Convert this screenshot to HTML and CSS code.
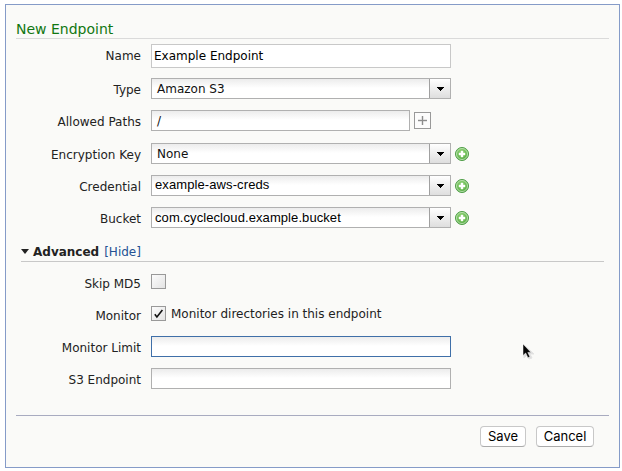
FILE: index.html
```html
<!DOCTYPE html>
<html lang="en">
<head>
<meta charset="utf-8">
<title>New Endpoint</title>
<link rel="stylesheet" href="styles.css">
</head>
<body>
<svg width="0" height="0" class="defs">
  <defs>
    <radialGradient id="green" cx=".45" cy=".35" r=".65"><stop offset="0" stop-color="#91d278"/><stop offset=".65" stop-color="#6abb53"/><stop offset="1" stop-color="#459838"/></radialGradient>
    <symbol id="arrow" viewBox="0 0 7 4"><path d="M0 0h7v1H6v1H5v1H4v1H3V3H2V2H1V1H0z"/></symbol>
    <symbol id="add" viewBox="0 0 14 14"><circle cx="7" cy="7" r="6.5" fill="url(#green)" stroke="#4f9d48"/><circle cx="7" cy="7" r="5.5" fill="none" stroke="#c0e5b4" stroke-width=".9"/><path d="M6 4h2v2h2v2H8v2H6V8H4V6h2z" fill="#fff" stroke="#fff" stroke-width=".4"/></symbol>
  </defs>
</svg>
<main class="panel">
  <h1 class="title">New Endpoint</h1>
  <div class="row row-name"><label>Name</label><div class="field name">Example Endpoint</div></div>
  <div class="row"><label>Type</label><div class="field select"><span class="value">Amazon S3</span><span class="drop"><svg width="7" height="4"><use href="#arrow"/></svg></span></div></div>
  <div class="row row-paths"><label>Allowed Paths</label><div class="field paths">/</div><span class="plus"><svg width="9" height="9" viewBox="0 0 9 9"><path d="M4.5 0v9M0 4.5h9" stroke="#ccc" stroke-width="2"/><path d="M4.5 0v9M0 4.5h9" stroke="#8c8c8c"/></svg></span></div>
  <div class="row"><label>Encryption Key</label><div class="field select"><span class="value">None</span><span class="drop"><svg width="7" height="4"><use href="#arrow"/></svg></span></div><svg class="add" width="14" height="14"><use href="#add"/></svg></div>
  <div class="row"><label>Credential</label><div class="field select"><span class="value plain cred">example-aws-creds</span><span class="drop"><svg width="7" height="4"><use href="#arrow"/></svg></span></div><svg class="add" width="14" height="14"><use href="#add"/></svg></div>
  <div class="row"><label>Bucket</label><div class="field select"><span class="value plain bucket">com.cyclecloud.example.bucket</span><span class="drop"><svg width="7" height="4"><use href="#arrow"/></svg></span></div><svg class="add" width="14" height="14"><use href="#add"/></svg></div>
  <div class="section"><svg width="8" height="5" viewBox="0 0 8 5"><path d="M0 0h8L4 5z" fill="#222"/></svg><b>Advanced</b><a>[Hide]</a></div>
  <div class="row row-check"><label>Skip MD5</label><span class="check"></span></div>
  <div class="row row-check row-monitor"><label>Monitor</label><span class="check"><svg width="13" height="13" viewBox="0 0 13 13"><path d="M2.8 7.2 4.9 9.9 10.4 2.9" fill="none" stroke="#111" stroke-width="1.6"/></svg></span><span class="hint">Monitor directories in this endpoint</span></div>
  <div class="row"><label>Monitor Limit</label><div class="field focus"></div></div>
  <div class="row"><label>S3 Endpoint</label><div class="field"></div></div>
  <footer class="footer"><span class="btn save">Save</span><span class="btn cancel">Cancel</span></footer>
</main>
<svg class="cursor" width="14" height="20" viewBox="0 0 14 20"><path d="M2 2v13l3-3 2 4 3-1-2-4h4z" fill="#ddd" stroke="#e3e3e3"/><path d="M1 1v11.5l2.7-2.5 2.2 4.7 2-1-2.1-4.3H9z" fill="#050505" stroke="#fff" stroke-width=".5"/></svg>
</body>
</html>
```
FILE: styles.css
```css
* { box-sizing: border-box; }
body {
  margin: 0;
  padding: 4px 0 0 5px;
  width: 622px;
  height: 471px;
  overflow: hidden;
  background: #fff;
  font: 12px/16px "DejaVu Sans", Verdana, sans-serif;
  color: #222;
  white-space: nowrap;
}
.defs { position: absolute; }
.panel {
  width: 615px;
  height: 464px;
  border: 1px solid #859bc8;
  background: #fafaf8;
}
.title {
  margin: 0 10px;
  height: 34px;
  padding-top: 14px;
  border-bottom: 1px solid #dadada;
  font-size: 14px;
  line-height: 20px;
  font-weight: normal;
  color: #117711;
}
.row {
  display: flex;
  align-items: flex-start;
  height: 32px;
  padding-top: 5px;
}
.row label {
  width: 135px;
  margin: 4px 10px 0 0;
  text-align: right;
}
.row-name { height: 34px; }
.row-paths { height: 33px; }
.row-check label { margin-top: 2px; }
.field {
  display: flex;
  width: 300px;
  height: 21px;
  border: 1px solid #b0b0b0;
  background: linear-gradient(#ececec, #fff 9px);
  line-height: 19px;
  padding-left: 5px;
  color: #111;
}
.field.name {
  height: 24px;
  border-color: #c8c8c8;
  background: #fff;
  line-height: 22px;
  padding-left: 2px;
  color: #000;
}
.field.paths { width: 259px; line-height: 21px; }
.field.focus { border-color: #3f6fa8; }
.value { flex: 1; line-height: 21px; }
.plain {
  margin-left: -2px;
  font-family: "Liberation Sans", Arial, sans-serif;
  font-size: 13px;
  color: #000;
}
.cred { line-height: 17px; letter-spacing: .1px; }
.bucket { line-height: 19px; letter-spacing: .08px; }
.drop {
  display: flex;
  align-items: center;
  justify-content: center;
  width: 21px;
  border-left: 1px solid #a0a0a0;
  background: linear-gradient(#fff, #dedede);
}
.plus {
  display: flex;
  align-items: center;
  justify-content: center;
  width: 17px;
  height: 17px;
  margin: 2px 0 0 4px;
  border: 1px solid #999;
  background: #fcfcfc;
}
.add { margin: 4px 0 0 4px; }
.section {
  display: flex;
  align-items: center;
  height: 28px;
  margin: 0 15px 7px;
  padding-top: 8px;
  border-bottom: 1px solid #c8c8c8;
}
.section b { margin: 0 5px 0 4px; }
.section a { color: #245293; }
.check {
  display: flex;
  width: 15px;
  height: 15px;
  border: 1px solid #999;
  background: linear-gradient(135deg, #fcfcfc, #e3e3e3);
}
.row-monitor { height: 30px; }
.hint { margin: 0 0 0 5px; }
.footer {
  display: flex;
  justify-content: flex-end;
  gap: 10px;
  margin: 20px 10px 0;
  padding: 10px 15px 0 0;
  border-top: 1px solid #a8abc0;
}
.btn {
  height: 21px;
  border: 1px solid #c8c8c8;
  border-bottom-color: #aaa;
  border-radius: 4px;
  background: #fff;
  color: #000;
  font: 13px/19px Inter, "Liberation Sans", sans-serif;
  text-align: center;
}
.save { width: 46px; }
.cancel { width: 58px; }
.cursor { position: absolute; left: 522px; top: 343px; }
```
